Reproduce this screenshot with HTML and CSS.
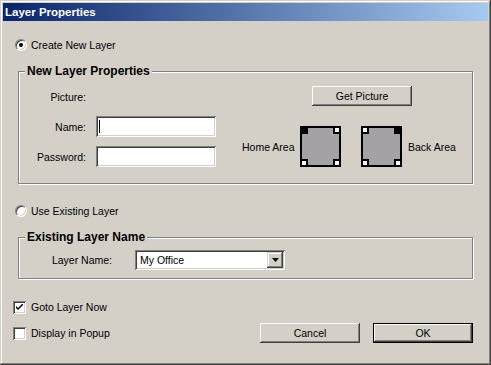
FILE: index.html
```html
<!DOCTYPE html>
<html lang="en">

<head>
    <meta charset="UTF-8">
    <title>Layer Properties</title>
    <link rel="stylesheet" href="styles.css">
</head>

<body>
    <div class="window">
        <div class="titlebar">Layer Properties</div>
        <div class="content">
            <div class="option">
                <span class="radio checked"></span>Create New Layer
            </div>

            <div class="group group-new">
                <span class="legend">New Layer Properties</span>
                <div class="fields">
                    <span class="label">Picture:</span>
                    <span></span>
                    <span class="label">Name:</span>
                    <div class="field"><span class="caret"></span></div>
                    <span class="label">Password:</span>
                    <div class="field"></div>
                </div>
                <div class="picture">
                    <div class="btn btn-get">Get Picture</div>
                    <div class="areas">
                        <span class="home-label">Home Area</span>
                        <svg class="area" width="41" height="41" viewBox="0 0 41 41">
                            <rect x="1" y="1" width="39" height="39" fill="#a4a2a4" stroke="#000" stroke-width="2"/>
                            <rect x="1" y="1" width="6" height="6" fill="#000" stroke="#000" stroke-width="2"/>
                            <rect x="34" y="1" width="6" height="6" fill="#fff" stroke="#000" stroke-width="2"/>
                            <rect x="1" y="34" width="6" height="6" fill="#fff" stroke="#000" stroke-width="2"/>
                            <rect x="34" y="34" width="6" height="6" fill="#fff" stroke="#000" stroke-width="2"/>
                        </svg>
                        <svg class="area area-back" width="41" height="41" viewBox="0 0 41 41">
                            <rect x="1" y="1" width="39" height="39" fill="#a4a2a4" stroke="#000" stroke-width="2"/>
                            <rect x="1" y="1" width="6" height="6" fill="#fff" stroke="#000" stroke-width="2"/>
                            <rect x="34" y="1" width="6" height="6" fill="#000" stroke="#000" stroke-width="2"/>
                            <rect x="1" y="34" width="6" height="6" fill="#fff" stroke="#000" stroke-width="2"/>
                            <rect x="34" y="34" width="6" height="6" fill="#fff" stroke="#000" stroke-width="2"/>
                        </svg>
                        <span class="back-label">Back Area</span>
                    </div>
                </div>
            </div>

            <div class="option option-existing">
                <span class="radio"></span>Use Existing Layer
            </div>

            <div class="group group-existing">
                <span class="legend">Existing Layer Name</span>
                <span class="label layer-label">Layer Name:</span>
                <div class="select">
                    <span class="select-text">My Office</span>
                    <span class="drop">
                        <svg width="7" height="4" viewBox="0 0 7 4"><path d="M0 0H7L3.5 4Z" fill="#000"/></svg>
                    </span>
                </div>
            </div>

            <div class="footer">
                <div class="checks">
                    <div class="check-row">
                        <span class="checkbox">
                            <svg width="7" height="7" viewBox="0 0 7 7"><path d="M0 2V4L2 6L7 1V-1L2 4Z" fill="#000"/></svg>
                        </span>Goto Layer Now
                    </div>
                    <div class="check-row">
                        <span class="checkbox"></span>Display in Popup
                    </div>
                </div>
                <div class="actions">
                    <div class="btn">Cancel</div>
                    <div class="btn btn-default">OK</div>
                </div>
            </div>
        </div>
    </div>
</body>

</html>
```

FILE: styles.css
```css
body {
    margin: 0;
    font-family: "Liberation Sans", Arial, sans-serif;
    font-size: 10.5px;
    color: #000;
    background: #d4d0c8;
}

.window {
    width: 491px;
    height: 365px;
    box-sizing: border-box;
    padding: 3px;
    background: #d4d0c8;
    box-shadow: inset -1px -1px #404040, inset 1px 1px #d4d0c8, inset -2px -2px #808080, inset 2px 2px #fff;
}

.titlebar {
    height: 18px;
    line-height: 18px;
    padding-left: 2px;
    color: #fff;
    font-size: 11.5px;
    font-weight: bold;
    background: linear-gradient(to right, #0a246a, #a6caf0);
}

.content {
    padding: 0 15px 0 10px;
}

.option {
    display: flex;
    align-items: center;
    height: 13px;
    margin-top: 17px;
}

.option-existing {
    margin-top: 20px;
}

.radio {
    position: relative;
    width: 12px;
    height: 12px;
    box-sizing: border-box;
    margin: 0 4px 0 2px;
    border-radius: 50%;
    background: #fff;
    border: 1px solid;
    border-color: #808080 #fff #fff #808080;
    box-shadow: inset 1px 1px #404040, inset -1px -1px #d4d0c8;
}

.radio.checked::after {
    content: "";
    position: absolute;
    left: 3px;
    top: 3px;
    width: 4px;
    height: 4px;
    border-radius: 50%;
    background: #000;
}

.group {
    position: relative;
    width: 455px;
    box-sizing: border-box;
    margin: 20px 0 0 5px;
    border: 1px solid #808080;
    box-shadow: inset 1px 1px #fff, 1px 1px #fff;
}

.legend {
    position: absolute;
    left: 6px;
    top: -7px;
    padding: 0 2px;
    line-height: 13px;
    font-size: 12px;
    font-weight: bold;
    background: #d4d0c8;
}

.group-new {
    display: flex;
    height: 113px;
    padding-top: 14px;
}

.fields {
    display: grid;
    grid-template-columns: 67px 120px;
    grid-auto-rows: 21px;
    column-gap: 10px;
    row-gap: 9px;
}

.label {
    display: flex;
    align-items: center;
    justify-content: flex-end;
}

.field {
    display: flex;
    align-items: center;
    padding: 0 3px;
    background: #fff;
    box-shadow: inset 1px 1px #808080, inset -1px -1px #fff, inset 2px 2px #404040, inset -2px -2px #d4d0c8;
}

.caret {
    width: 1px;
    height: 13px;
    background: #000;
}

.picture {
    margin-left: 26px;
}

.btn {
    display: flex;
    align-items: center;
    justify-content: center;
    width: 100px;
    height: 20px;
    box-sizing: border-box;
    background: #d4d0c8;
    box-shadow: inset -1px -1px #404040, inset 1px 1px #fff, inset -2px -2px #808080, inset 2px 2px #d4d0c8;
}

.btn-get {
    margin-left: 70px;
}

.areas {
    display: flex;
    align-items: center;
    margin-top: 20px;
}

.home-label {
    width: 53px;
    white-space: nowrap;
}

.area {
    display: block;
    margin-left: 5px;
}

.area-back {
    margin-left: 20px;
}

.back-label {
    margin-left: 6px;
}

.group-existing {
    display: flex;
    height: 42px;
    padding-top: 12px;
}

.layer-label {
    width: 93px;
    height: 20px;
}

.select {
    display: flex;
    align-items: center;
    justify-content: space-between;
    width: 150px;
    height: 20px;
    box-sizing: border-box;
    margin-left: 23px;
    padding: 2px;
    background: #fff;
    box-shadow: inset 1px 1px #808080, inset -1px -1px #fff, inset 2px 2px #404040, inset -2px -2px #d4d0c8;
}

.select-text {
    padding-left: 3px;
}

.drop {
    display: flex;
    align-items: center;
    justify-content: center;
    width: 16px;
    height: 16px;
    background: #d4d0c8;
    box-shadow: inset -1px -1px #404040, inset 1px 1px #d4d0c8, inset -2px -2px #808080, inset 2px 2px #fff;
}

.footer {
    display: flex;
    align-items: flex-end;
    margin-top: 18px;
}

.checks {
    display: flex;
    flex-direction: column;
    gap: 6px;
}

.check-row {
    display: flex;
    align-items: center;
    height: 20px;
}

.checkbox {
    display: flex;
    align-items: center;
    justify-content: center;
    width: 13px;
    height: 13px;
    box-sizing: border-box;
    margin-right: 5px;
    background: #fff;
    box-shadow: inset 1px 1px #808080, inset -1px -1px #fff, inset 2px 2px #404040, inset -2px -2px #d4d0c8;
}

.actions {
    display: flex;
    gap: 13px;
    margin-left: auto;
}

.btn-default {
    border: 1px solid #000;
}
```
